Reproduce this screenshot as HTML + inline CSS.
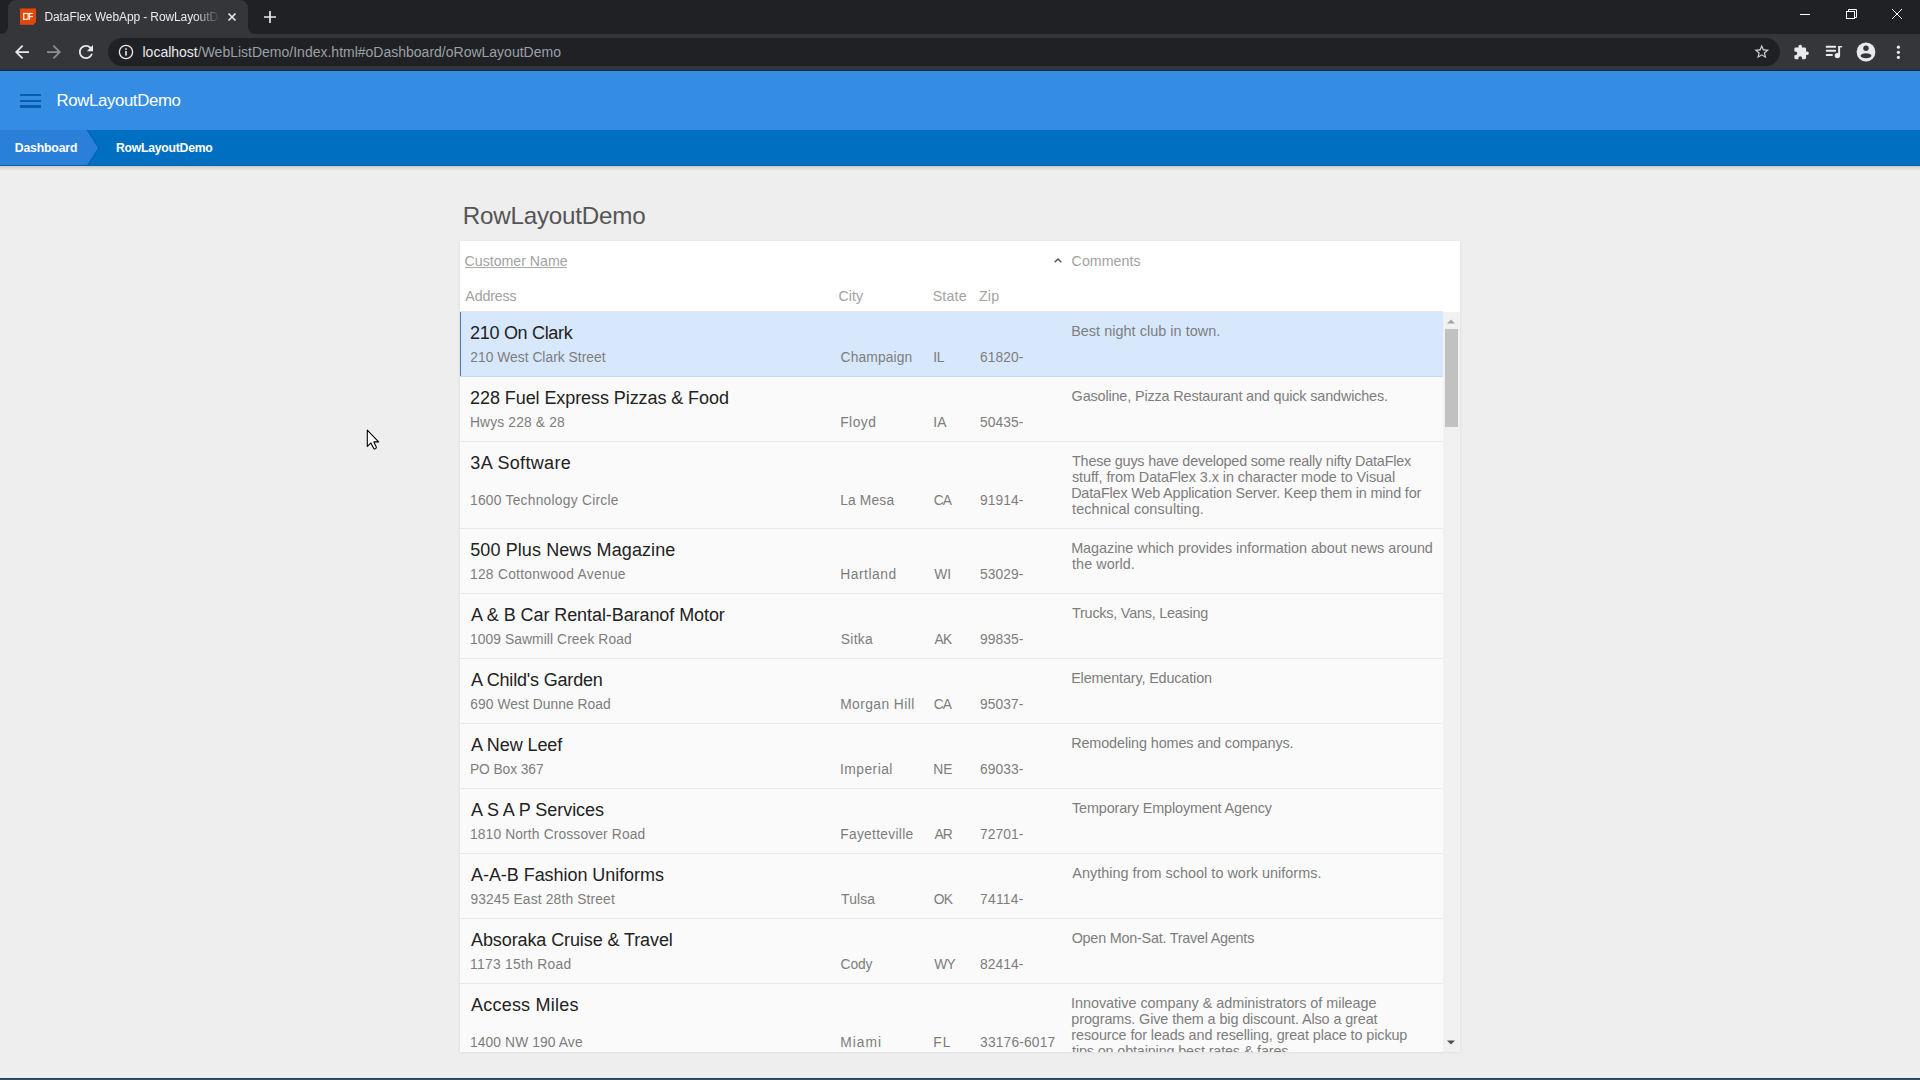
<!DOCTYPE html><html><head><meta charset="utf-8"><title>RowLayoutDemo</title><style>
*{margin:0;padding:0;box-sizing:border-box}
html,body{width:1920px;height:1080px;overflow:hidden;background:#eeeeee;font-family:"Liberation Sans",sans-serif}
.a{position:absolute}
.t{position:absolute;white-space:nowrap}
svg{position:absolute;overflow:visible}
</style></head><body>
<div class="a" style="left:0;top:0;width:1920px;height:34px;background:#202124"></div>
<div class="a" style="left:8px;top:0;width:240px;height:34px;background:#35363a;border-radius:8px 8px 0 0"></div>
<svg style="left:0;top:26px" width="8" height="8"><path d="M0 8 Q8 8 8 0 L8 8Z" fill="#35363a"/></svg>
<svg style="left:248px;top:26px" width="8" height="8"><path d="M8 8 Q0 8 0 0 L0 8Z" fill="#35363a"/></svg>
<div class="a" style="left:0;top:34px;width:1920px;height:35px;background:#35363a"></div>
<div class="a" style="left:0;top:68px;width:1920px;height:2px;background:#2d3546"></div>
<div class="a" style="left:0;top:70px;width:1920px;height:1px;background:#032d59"></div>
<div class="a" style="left:108px;top:38px;width:1672px;height:28px;background:#202124;border-radius:14px"></div>
<svg style="left:20px;top:8px" width="16" height="17" viewBox="0 0 16 17"><rect x="0" y="0" width="16" height="17" fill="#e0480f"/><rect x="0" y="0" width="16" height="1" fill="#a8350e"/><rect x="0" y="16" width="12" height="1" fill="#b5451e"/><path d="M13 17L16 14V17Z" fill="#35363a"/><g fill="#fff3d6"><rect x="3" y="4.9" width="5.6" height="1.2"/><rect x="3" y="5" width="1.3" height="6.9"/><rect x="3" y="10.7" width="5" height="1.2"/><rect x="7.6" y="5.5" width="1.2" height="6"/><rect x="8.9" y="4.9" width="1.2" height="7"/><rect x="8.9" y="4.9" width="4.2" height="1.2"/><rect x="8.9" y="8" width="4" height="1.1"/></g></svg>
<div class="t" style="left:44.5px;top:9.5px;width:175px;overflow:hidden;font-size:12px;line-height:14px;letter-spacing:-0.11px;color:#e8eaed;-webkit-mask-image:linear-gradient(90deg,#000 150px,transparent 175px)">DataFlex WebApp - RowLayoutDemo</div>
<svg style="left:227px;top:12px" width="10" height="10"><path d="M1.5 1.5L8.5 8.5M8.5 1.5L1.5 8.5" stroke="#e8eaed" stroke-width="1.6"/></svg>
<svg style="left:263px;top:10px" width="14" height="14"><path d="M7 1V13M1 7H13" stroke="#e8eaed" stroke-width="1.7"/></svg>
<svg style="left:1800px;top:14px" width="10" height="1"><rect x="0" y="0" width="10" height="1" fill="#fff"/></svg>
<svg style="left:1846px;top:9px" width="11" height="10"><path d="M2.5 2.5V0.5H10.5V8.5H8.5" fill="none" stroke="#fff" stroke-width="1"/><rect x="0.5" y="2.5" width="8" height="7" fill="none" stroke="#fff" stroke-width="1"/></svg>
<svg style="left:1892px;top:9px" width="10" height="10"><path d="M0 0L10 10M10 0L0 10" stroke="#fff" stroke-width="1"/></svg>
<svg style="left:15px;top:45px" width="14" height="14" viewBox="4 4 16 16"><path d="M20 11H7.83l5.59-5.59L12 4l-8 8 8 8 1.41-1.41L7.83 13H20v-2z" fill="#e8eaed"/></svg>
<svg style="left:47px;top:45px" width="14" height="14" viewBox="4 4 16 16"><path d="M12 4l-1.41 1.41L16.17 11H4v2h12.17l-5.58 5.59L12 20l8-8z" fill="#8c8e92"/></svg>
<svg style="left:79px;top:45px" width="14" height="14" viewBox="4 4 16 16"><path d="M17.65 6.35C16.2 4.9 14.21 4 12 4c-4.42 0-7.99 3.58-7.99 8s3.57 8 7.99 8c3.73 0 6.84-2.55 7.73-6h-2.08c-.82 2.33-3.04 4-5.65 4-3.31 0-6-2.69-6-6s2.69-6 6-6c1.66 0 3.14.69 4.22 1.78L13 11h7V4l-2.35 2.35z" fill="#e8eaed"/></svg>
<svg style="left:118px;top:44px" width="16" height="16"><circle cx="8" cy="8" r="6.6" fill="none" stroke="#e8eaed" stroke-width="1.3"/><rect x="7.2" y="7" width="1.6" height="4.6" fill="#e8eaed"/><rect x="7.2" y="4.3" width="1.6" height="1.6" fill="#e8eaed"/></svg>
<div class="t" style="left:142.5px;top:44px;font-size:14px;line-height:16px;color:#e8eaed">localhost<span style="color:#9aa0a6">/WebListDemo/Index.html#oDashboard/oRowLayoutDemo</span></div>
<svg style="left:1753.2px;top:43.4px" width="17.5" height="17.5" viewBox="0 0 24 24"><path d="M22 9.24l-7.19-.62L12 2 9.19 8.63 2 9.24l5.46 4.73L5.82 21 12 17.27 18.18 21l-1.63-7.03L22 9.24zM12 15.4l-3.76 2.27 1-4.28-3.32-2.88 4.38-.38L12 6.1l1.71 4.04 4.38.38-3.32 2.88 1 4.28L12 15.4z" fill="#d0d3d6"/></svg>
<svg style="left:1793.4px;top:44.1px" width="16.5" height="16.5" viewBox="0 0 24 24"><path d="M20.5 11H19V7c0-1.1-.9-2-2-2h-4V3.5C13 2.12 11.88 1 10.5 1S8 2.12 8 3.5V5H4c-1.1 0-1.99.9-1.99 2v3.8H3.5c1.49 0 2.7 1.21 2.7 2.7s-1.21 2.7-2.7 2.7H2V20c0 1.1.9 2 2 2h3.8v-1.5c0-1.49 1.21-2.7 2.7-2.7 1.49 0 2.7 1.21 2.7 2.7V22H17c1.1 0 2-.9 2-2v-4h1.5c1.38 0 2.5-1.12 2.5-2.5S21.88 11 20.5 11z" fill="#e8eaed"/></svg>
<svg style="left:1825px;top:44px" width="18" height="15" viewBox="0 0 18 15"><rect x="0.8" y="1.8" width="10.2" height="2" rx="0.6" fill="#e8eaed"/><rect x="0.8" y="5.7" width="10.2" height="2" rx="0.6" fill="#e8eaed"/><rect x="0.8" y="9.9" width="7" height="2" rx="0.6" fill="#e8eaed"/><rect x="13.2" y="2" width="1.9" height="9.6" fill="#e8eaed"/><rect x="13.2" y="2" width="3.9" height="1.4" fill="#e8eaed"/><circle cx="12.4" cy="11.6" r="2.7" fill="#e8eaed"/></svg>
<svg style="left:1856px;top:42px" width="20" height="20" viewBox="0 0 20 20"><circle cx="10" cy="10" r="9.4" fill="#e8eaed"/><circle cx="10" cy="6.3" r="2.7" fill="#35363a"/><ellipse cx="10" cy="13.8" rx="5.4" ry="2.5" fill="#35363a"/></svg>
<svg style="left:1896px;top:45px" width="5" height="15"><circle cx="2.4" cy="2.2" r="1.6" fill="#e8eaed"/><circle cx="2.4" cy="7.3" r="1.6" fill="#e8eaed"/><circle cx="2.4" cy="12.4" r="1.6" fill="#e8eaed"/></svg>
<div class="a" style="left:0;top:71px;width:1920px;height:59px;background:#348de3"></div>
<div class="a" style="left:0;top:71px;width:1920px;height:1px;background:#4f8bc4"></div>
<div class="a" style="left:20px;top:93.5px;width:21px;height:2.5px;background:#0b5cae"></div>
<div class="a" style="left:20px;top:99.5px;width:21px;height:2.5px;background:#0b5cae"></div>
<div class="a" style="left:20px;top:105.3px;width:21px;height:2.5px;background:#0b5cae"></div>
<div class="t" style="left:56.46px;top:92.78px;font-size:16.8px;line-height:16.8px;color:#ffffff;font-weight:normal;letter-spacing:-0.362px;">RowLayoutDemo</div>
<div class="a" style="left:0;top:130px;width:1920px;height:36px;background:#006fc2"></div>
<svg style="left:0;top:130px" width="100" height="36"><path d="M0 0H87L98.5 18L87 36H0Z" fill="#2a80d9"/><path d="M87.3 0L98.8 18L87.3 36" fill="none" stroke="#0062b8" stroke-width="1.2"/></svg>
<div class="a" style="left:0;top:165px;width:1920px;height:1px;background:#0b5ea9"></div>
<div class="t" style="left:14.71px;top:142.07px;font-size:12.2px;line-height:12.2px;color:#ffffff;font-weight:bold;letter-spacing:-0.125px;">Dashboard</div>
<div class="t" style="left:115.91px;top:142.07px;font-size:12.2px;line-height:12.2px;color:#ffffff;font-weight:bold;letter-spacing:-0.224px;">RowLayoutDemo</div>
<div class="a" style="left:0;top:166px;width:1920px;height:1px;background:#cdcdcd"></div>
<div class="a" style="left:0;top:167px;width:1920px;height:1px;background:#d6d6d6"></div>
<div class="a" style="left:0;top:168px;width:1920px;height:1px;background:#dedede"></div>
<div class="a" style="left:0;top:169px;width:1920px;height:1px;background:#e5e5e5"></div>
<div class="a" style="left:0;top:170px;width:1920px;height:1px;background:#eaeaea"></div>
<div class="t" style="left:462.66px;top:204.11px;font-size:24.2px;line-height:24.2px;color:#555555;font-weight:normal;letter-spacing:-0.209px;">RowLayoutDemo</div>
<div class="a" style="left:460px;top:241px;width:1000px;height:810px;background:#ffffff;box-shadow:0 1px 3px rgba(0,0,0,0.10)"></div>
<div class="t" style="left:464.59px;top:254.18px;font-size:14.2px;line-height:14.2px;color:#a2a2a2;font-weight:normal;letter-spacing:-0.025px;">Customer Name</div>
<div class="a" style="left:465px;top:267px;width:102px;height:1px;background:#a8a8a8"></div>
<svg style="left:1054px;top:258px" width="8" height="5"><path d="M0.7 4.3L4 1L7.3 4.3" fill="none" stroke="#555" stroke-width="1.5"/></svg>
<div class="t" style="left:1071.59px;top:254.18px;font-size:14.2px;line-height:14.2px;color:#a2a2a2;font-weight:normal;letter-spacing:0.064px;">Comments</div>
<div class="t" style="left:465.30px;top:289.18px;font-size:14.2px;line-height:14.2px;color:#a2a2a2;font-weight:normal;letter-spacing:-0.119px;">Address</div>
<div class="t" style="left:838.39px;top:289.18px;font-size:14.2px;line-height:14.2px;color:#a2a2a2;font-weight:normal;letter-spacing:0.062px;">City</div>
<div class="t" style="left:932.66px;top:289.18px;font-size:14.2px;line-height:14.2px;color:#a2a2a2;font-weight:normal;letter-spacing:0.213px;">State</div>
<div class="t" style="left:978.97px;top:289.18px;font-size:14.2px;line-height:14.2px;color:#a2a2a2;font-weight:normal;letter-spacing:0.178px;">Zip</div>
<div class="a" style="left:460px;top:311px;width:983px;height:741px;background:#fafafa;overflow:hidden" id="list">
<div class="a" style="left:0;top:0;width:983px;height:1px;background:#e6e6e6"></div>
<div class="a" style="left:0;top:1px;width:983px;height:65px;background:#d7e8fc"></div>
<div class="a" style="left:0;top:65px;width:982px;height:1px;background:rgba(0,0,0,0.065)"></div>
<div class="a" style="left:0;top:1px;width:1px;height:64px;background:#4a7bab"></div>
<div class="t" style="left:10.10px;top:12.66px;font-size:18.0px;line-height:18.0px;color:#222222;font-weight:normal;letter-spacing:-0.311px;">210 On Clark</div>
<div class="t" style="left:10.31px;top:39.92px;font-size:13.8px;line-height:13.8px;color:#7d7d7d;font-weight:normal;letter-spacing:0.024px;">210 West Clark Street</div>
<div class="t" style="left:380.61px;top:39.92px;font-size:13.8px;line-height:13.8px;color:#7d7d7d;font-weight:normal;letter-spacing:0.141px;">Champaign</div>
<div class="t" style="left:473.16px;top:39.92px;font-size:13.8px;line-height:13.8px;color:#7d7d7d;font-weight:normal;letter-spacing:-0.167px;">IL</div>
<div class="t" style="left:519.91px;top:39.92px;font-size:13.8px;line-height:13.8px;color:#7d7d7d;font-weight:normal;letter-spacing:0.105px;">61820-</div>
<div class="t" style="left:611.15px;top:12.71px;font-size:14.4px;line-height:14.4px;color:#7d7d7d;font-weight:normal;letter-spacing:0.05px;">Best night club in town.</div>
<div class="a" style="left:0;top:66px;width:983px;height:65px;background:#fafafa"></div>
<div class="a" style="left:0;top:130px;width:982px;height:1px;background:rgba(0,0,0,0.065)"></div>
<div class="t" style="left:10.10px;top:77.66px;font-size:18.0px;line-height:18.0px;color:#222222;font-weight:normal;letter-spacing:-0.08px;">228 Fuel Express Pizzas &amp; Food</div>
<div class="t" style="left:9.90px;top:104.92px;font-size:13.8px;line-height:13.8px;color:#7d7d7d;font-weight:normal;letter-spacing:0.171px;">Hwys 228 &amp; 28</div>
<div class="t" style="left:380.20px;top:104.92px;font-size:13.8px;line-height:13.8px;color:#7d7d7d;font-weight:normal;letter-spacing:0.498px;">Floyd</div>
<div class="t" style="left:473.16px;top:104.92px;font-size:13.8px;line-height:13.8px;color:#7d7d7d;font-weight:normal;letter-spacing:0.201px;">IA</div>
<div class="t" style="left:520.05px;top:104.92px;font-size:13.8px;line-height:13.8px;color:#7d7d7d;font-weight:normal;letter-spacing:0.077px;">50435-</div>
<div class="t" style="left:611.58px;top:77.71px;font-size:14.4px;line-height:14.4px;color:#7d7d7d;font-weight:normal;letter-spacing:-0.143px;">Gasoline, Pizza Restaurant and quick sandwiches.</div>
<div class="a" style="left:0;top:131px;width:983px;height:87px;background:#fafafa"></div>
<div class="a" style="left:0;top:217px;width:982px;height:1px;background:rgba(0,0,0,0.065)"></div>
<div class="t" style="left:10.37px;top:142.66px;font-size:18.0px;line-height:18.0px;color:#222222;font-weight:normal;letter-spacing:0.333px;">3A Software</div>
<div class="t" style="left:9.96px;top:183.02px;font-size:13.8px;line-height:13.8px;color:#7d7d7d;font-weight:normal;letter-spacing:0.253px;">1600 Technology Circle</div>
<div class="t" style="left:380.20px;top:183.02px;font-size:13.8px;line-height:13.8px;color:#7d7d7d;font-weight:normal;letter-spacing:0.164px;">La Mesa</div>
<div class="t" style="left:473.71px;top:183.02px;font-size:13.8px;line-height:13.8px;color:#7d7d7d;font-weight:normal;letter-spacing:-0.8px;">CA</div>
<div class="t" style="left:519.98px;top:183.02px;font-size:13.8px;line-height:13.8px;color:#7d7d7d;font-weight:normal;letter-spacing:0.091px;">91914-</div>
<div class="t" style="left:612.01px;top:142.71px;font-size:14.4px;line-height:14.4px;color:#7d7d7d;font-weight:normal;letter-spacing:-0.203px;">These guys have developed some really nifty DataFlex</div>
<div class="t" style="left:611.94px;top:158.71px;font-size:14.4px;line-height:14.4px;color:#7d7d7d;font-weight:normal;letter-spacing:-0.067px;">stuff, from DataFlex 3.x in character mode to Visual</div>
<div class="t" style="left:611.15px;top:174.71px;font-size:14.4px;line-height:14.4px;color:#7d7d7d;font-weight:normal;letter-spacing:-0.164px;">DataFlex Web Application Server. Keep them in mind for</div>
<div class="t" style="left:612.08px;top:190.71px;font-size:14.4px;line-height:14.4px;color:#7d7d7d;font-weight:normal;letter-spacing:0.108px;">technical consulting.</div>
<div class="a" style="left:0;top:218px;width:983px;height:65px;background:#fafafa"></div>
<div class="a" style="left:0;top:282px;width:982px;height:1px;background:rgba(0,0,0,0.065)"></div>
<div class="t" style="left:10.28px;top:229.66px;font-size:18.0px;line-height:18.0px;color:#222222;font-weight:normal;letter-spacing:0.091px;">500 Plus News Magazine</div>
<div class="t" style="left:9.96px;top:256.92px;font-size:13.8px;line-height:13.8px;color:#7d7d7d;font-weight:normal;letter-spacing:0.272px;">128 Cottonwood Avenue</div>
<div class="t" style="left:380.20px;top:256.92px;font-size:13.8px;line-height:13.8px;color:#7d7d7d;font-weight:normal;letter-spacing:0.538px;">Hartland</div>
<div class="t" style="left:474.33px;top:256.92px;font-size:13.8px;line-height:13.8px;color:#7d7d7d;font-weight:normal;letter-spacing:-0.025px;">WI</div>
<div class="t" style="left:520.05px;top:256.92px;font-size:13.8px;line-height:13.8px;color:#7d7d7d;font-weight:normal;letter-spacing:0.077px;">53029-</div>
<div class="t" style="left:611.15px;top:229.71px;font-size:14.4px;line-height:14.4px;color:#7d7d7d;font-weight:normal;letter-spacing:-0.028px;">Magazine which provides information about news around</div>
<div class="t" style="left:612.08px;top:245.71px;font-size:14.4px;line-height:14.4px;color:#7d7d7d;font-weight:normal;letter-spacing:0.035px;">the world.</div>
<div class="a" style="left:0;top:283px;width:983px;height:65px;background:#fafafa"></div>
<div class="a" style="left:0;top:347px;width:982px;height:1px;background:rgba(0,0,0,0.065)"></div>
<div class="t" style="left:11.00px;top:294.66px;font-size:18.0px;line-height:18.0px;color:#222222;font-weight:normal;letter-spacing:-0.078px;">A &amp; B Car Rental-Baranof Motor</div>
<div class="t" style="left:9.96px;top:321.92px;font-size:13.8px;line-height:13.8px;color:#7d7d7d;font-weight:normal;letter-spacing:0.097px;">1009 Sawmill Creek Road</div>
<div class="t" style="left:380.68px;top:321.92px;font-size:13.8px;line-height:13.8px;color:#7d7d7d;font-weight:normal;letter-spacing:0.346px;">Sitka</div>
<div class="t" style="left:474.40px;top:321.92px;font-size:13.8px;line-height:13.8px;color:#7d7d7d;font-weight:normal;letter-spacing:-0.716px;">AK</div>
<div class="t" style="left:519.98px;top:321.92px;font-size:13.8px;line-height:13.8px;color:#7d7d7d;font-weight:normal;letter-spacing:0.091px;">99835-</div>
<div class="t" style="left:612.01px;top:294.71px;font-size:14.4px;line-height:14.4px;color:#7d7d7d;font-weight:normal;letter-spacing:-0.224px;">Trucks, Vans, Leasing</div>
<div class="a" style="left:0;top:348px;width:983px;height:65px;background:#fafafa"></div>
<div class="a" style="left:0;top:412px;width:982px;height:1px;background:rgba(0,0,0,0.065)"></div>
<div class="t" style="left:11.00px;top:359.66px;font-size:18.0px;line-height:18.0px;color:#222222;font-weight:normal;letter-spacing:-0.179px;">A Child&#x27;s Garden</div>
<div class="t" style="left:10.31px;top:386.92px;font-size:13.8px;line-height:13.8px;color:#7d7d7d;font-weight:normal;letter-spacing:0.063px;">690 West Dunne Road</div>
<div class="t" style="left:380.20px;top:386.92px;font-size:13.8px;line-height:13.8px;color:#7d7d7d;font-weight:normal;letter-spacing:0.424px;">Morgan Hill</div>
<div class="t" style="left:473.71px;top:386.92px;font-size:13.8px;line-height:13.8px;color:#7d7d7d;font-weight:normal;letter-spacing:-0.8px;">CA</div>
<div class="t" style="left:519.98px;top:386.92px;font-size:13.8px;line-height:13.8px;color:#7d7d7d;font-weight:normal;letter-spacing:0.091px;">95037-</div>
<div class="t" style="left:611.15px;top:359.71px;font-size:14.4px;line-height:14.4px;color:#7d7d7d;font-weight:normal;letter-spacing:-0.143px;">Elementary, Education</div>
<div class="a" style="left:0;top:413px;width:983px;height:65px;background:#fafafa"></div>
<div class="a" style="left:0;top:477px;width:982px;height:1px;background:rgba(0,0,0,0.065)"></div>
<div class="t" style="left:11.00px;top:424.66px;font-size:18.0px;line-height:18.0px;color:#222222;font-weight:normal;letter-spacing:-0.086px;">A New Leef</div>
<div class="t" style="left:9.90px;top:451.92px;font-size:13.8px;line-height:13.8px;color:#7d7d7d;font-weight:normal;letter-spacing:-0.076px;">PO Box 367</div>
<div class="t" style="left:380.06px;top:451.92px;font-size:13.8px;line-height:13.8px;color:#7d7d7d;font-weight:normal;letter-spacing:0.469px;">Imperial</div>
<div class="t" style="left:473.30px;top:451.92px;font-size:13.8px;line-height:13.8px;color:#7d7d7d;font-weight:normal;letter-spacing:0.043px;">NE</div>
<div class="t" style="left:519.91px;top:451.92px;font-size:13.8px;line-height:13.8px;color:#7d7d7d;font-weight:normal;letter-spacing:0.105px;">69033-</div>
<div class="t" style="left:611.15px;top:424.71px;font-size:14.4px;line-height:14.4px;color:#7d7d7d;font-weight:normal;letter-spacing:-0.108px;">Remodeling homes and companys.</div>
<div class="a" style="left:0;top:478px;width:983px;height:65px;background:#fafafa"></div>
<div class="a" style="left:0;top:542px;width:982px;height:1px;background:rgba(0,0,0,0.065)"></div>
<div class="t" style="left:11.00px;top:489.66px;font-size:18.0px;line-height:18.0px;color:#222222;font-weight:normal;letter-spacing:-0.047px;">A S A P Services</div>
<div class="t" style="left:9.96px;top:516.92px;font-size:13.8px;line-height:13.8px;color:#7d7d7d;font-weight:normal;letter-spacing:0.144px;">1810 North Crossover Road</div>
<div class="t" style="left:380.20px;top:516.92px;font-size:13.8px;line-height:13.8px;color:#7d7d7d;font-weight:normal;letter-spacing:0.3px;">Fayetteville</div>
<div class="t" style="left:474.40px;top:516.92px;font-size:13.8px;line-height:13.8px;color:#7d7d7d;font-weight:normal;letter-spacing:-0.8px;">AR</div>
<div class="t" style="left:519.91px;top:516.92px;font-size:13.8px;line-height:13.8px;color:#7d7d7d;font-weight:normal;letter-spacing:0.105px;">72701-</div>
<div class="t" style="left:612.01px;top:489.71px;font-size:14.4px;line-height:14.4px;color:#7d7d7d;font-weight:normal;letter-spacing:-0.125px;">Temporary Employment Agency</div>
<div class="a" style="left:0;top:543px;width:983px;height:65px;background:#fafafa"></div>
<div class="a" style="left:0;top:607px;width:982px;height:1px;background:rgba(0,0,0,0.065)"></div>
<div class="t" style="left:11.00px;top:554.66px;font-size:18.0px;line-height:18.0px;color:#222222;font-weight:normal;letter-spacing:-0.053px;">A-A-B Fashion Uniforms</div>
<div class="t" style="left:10.38px;top:581.92px;font-size:13.8px;line-height:13.8px;color:#7d7d7d;font-weight:normal;letter-spacing:0.156px;">93245 East 28th Street</div>
<div class="t" style="left:381.02px;top:581.92px;font-size:13.8px;line-height:13.8px;color:#7d7d7d;font-weight:normal;letter-spacing:0.197px;">Tulsa</div>
<div class="t" style="left:473.78px;top:581.92px;font-size:13.8px;line-height:13.8px;color:#7d7d7d;font-weight:normal;letter-spacing:-0.8px;">OK</div>
<div class="t" style="left:519.91px;top:581.92px;font-size:13.8px;line-height:13.8px;color:#7d7d7d;font-weight:normal;letter-spacing:0.312px;">74114-</div>
<div class="t" style="left:612.30px;top:554.71px;font-size:14.4px;line-height:14.4px;color:#7d7d7d;font-weight:normal;letter-spacing:0.032px;">Anything from school to work uniforms.</div>
<div class="a" style="left:0;top:608px;width:983px;height:65px;background:#fafafa"></div>
<div class="a" style="left:0;top:672px;width:982px;height:1px;background:rgba(0,0,0,0.065)"></div>
<div class="t" style="left:11.00px;top:619.66px;font-size:18.0px;line-height:18.0px;color:#222222;font-weight:normal;letter-spacing:-0.098px;">Absoraka Cruise &amp; Travel</div>
<div class="t" style="left:9.96px;top:646.92px;font-size:13.8px;line-height:13.8px;color:#7d7d7d;font-weight:normal;letter-spacing:0.316px;">1173 15th Road</div>
<div class="t" style="left:380.61px;top:646.92px;font-size:13.8px;line-height:13.8px;color:#7d7d7d;font-weight:normal;letter-spacing:-0.111px;">Cody</div>
<div class="t" style="left:474.33px;top:646.92px;font-size:13.8px;line-height:13.8px;color:#7d7d7d;font-weight:normal;letter-spacing:-0.8px;">WY</div>
<div class="t" style="left:520.05px;top:646.92px;font-size:13.8px;line-height:13.8px;color:#7d7d7d;font-weight:normal;letter-spacing:0.077px;">82414-</div>
<div class="t" style="left:611.65px;top:619.71px;font-size:14.4px;line-height:14.4px;color:#7d7d7d;font-weight:normal;letter-spacing:-0.234px;">Open Mon-Sat. Travel Agents</div>
<div class="a" style="left:0;top:673px;width:983px;height:87px;background:#fafafa"></div>
<div class="a" style="left:0;top:759px;width:982px;height:1px;background:rgba(0,0,0,0.065)"></div>
<div class="t" style="left:11.00px;top:684.66px;font-size:18.0px;line-height:18.0px;color:#222222;font-weight:normal;letter-spacing:0.218px;">Access Miles</div>
<div class="t" style="left:9.96px;top:725.02px;font-size:13.8px;line-height:13.8px;color:#7d7d7d;font-weight:normal;letter-spacing:0.117px;">1400 NW 190 Ave</div>
<div class="t" style="left:380.20px;top:725.02px;font-size:13.8px;line-height:13.8px;color:#7d7d7d;font-weight:normal;letter-spacing:1.031px;">Miami</div>
<div class="t" style="left:473.30px;top:725.02px;font-size:13.8px;line-height:13.8px;color:#7d7d7d;font-weight:normal;letter-spacing:1.041px;">FL</div>
<div class="t" style="left:520.12px;top:725.02px;font-size:13.8px;line-height:13.8px;color:#7d7d7d;font-weight:normal;letter-spacing:0.161px;">33176-6017</div>
<div class="t" style="left:611.00px;top:684.71px;font-size:14.4px;line-height:14.4px;color:#7d7d7d;font-weight:normal;letter-spacing:-0.018px;">Innovative company &amp; administrators of mileage</div>
<div class="t" style="left:611.36px;top:700.71px;font-size:14.4px;line-height:14.4px;color:#7d7d7d;font-weight:normal;letter-spacing:-0.105px;">programs. Give them a big discount. Also a great</div>
<div class="t" style="left:611.36px;top:716.71px;font-size:14.4px;line-height:14.4px;color:#7d7d7d;font-weight:normal;letter-spacing:-0.103px;">resource for leads and reselling, great place to pickup</div>
<div class="t" style="left:612.08px;top:732.71px;font-size:14.4px;line-height:14.4px;color:#7d7d7d;font-weight:normal;letter-spacing:-0.149px;">tips on obtaining best rates &amp; fares.</div>
</div>
<div class="a" style="left:1443px;top:312px;width:17px;height:740px;background:#f1f1f1"></div>
<svg style="left:1446px;top:318px" width="10" height="6"><path d="M1 5.5L5 1.5L9 5.5Z" fill="#a3a3a3"/></svg>
<div class="a" style="left:1445px;top:329px;width:13px;height:98px;background:#c1c1c1"></div>
<svg style="left:1446px;top:1040px" width="10" height="6"><path d="M1 0.5L5 4.5L9 0.5Z" fill="#505050"/></svg>
<div class="a" style="left:0;top:1078px;width:1920px;height:1px;background:#26445f"></div>
<div class="a" style="left:0;top:1079px;width:1920px;height:1px;background:#34506b"></div>
<svg style="left:366px;top:429px" width="14" height="22" viewBox="0 0 14 22"><path d="M1.3 1.2V17.4L4.9 13.9L7.6 19.3Q8.2 20.1 9.1 19.7L9.8 19.4Q10.6 18.9 10.3 18.1L7.8 12.9H12.6Z" fill="#fff" stroke="#000" stroke-width="1.1" stroke-linejoin="round"/></svg>
</body></html>
